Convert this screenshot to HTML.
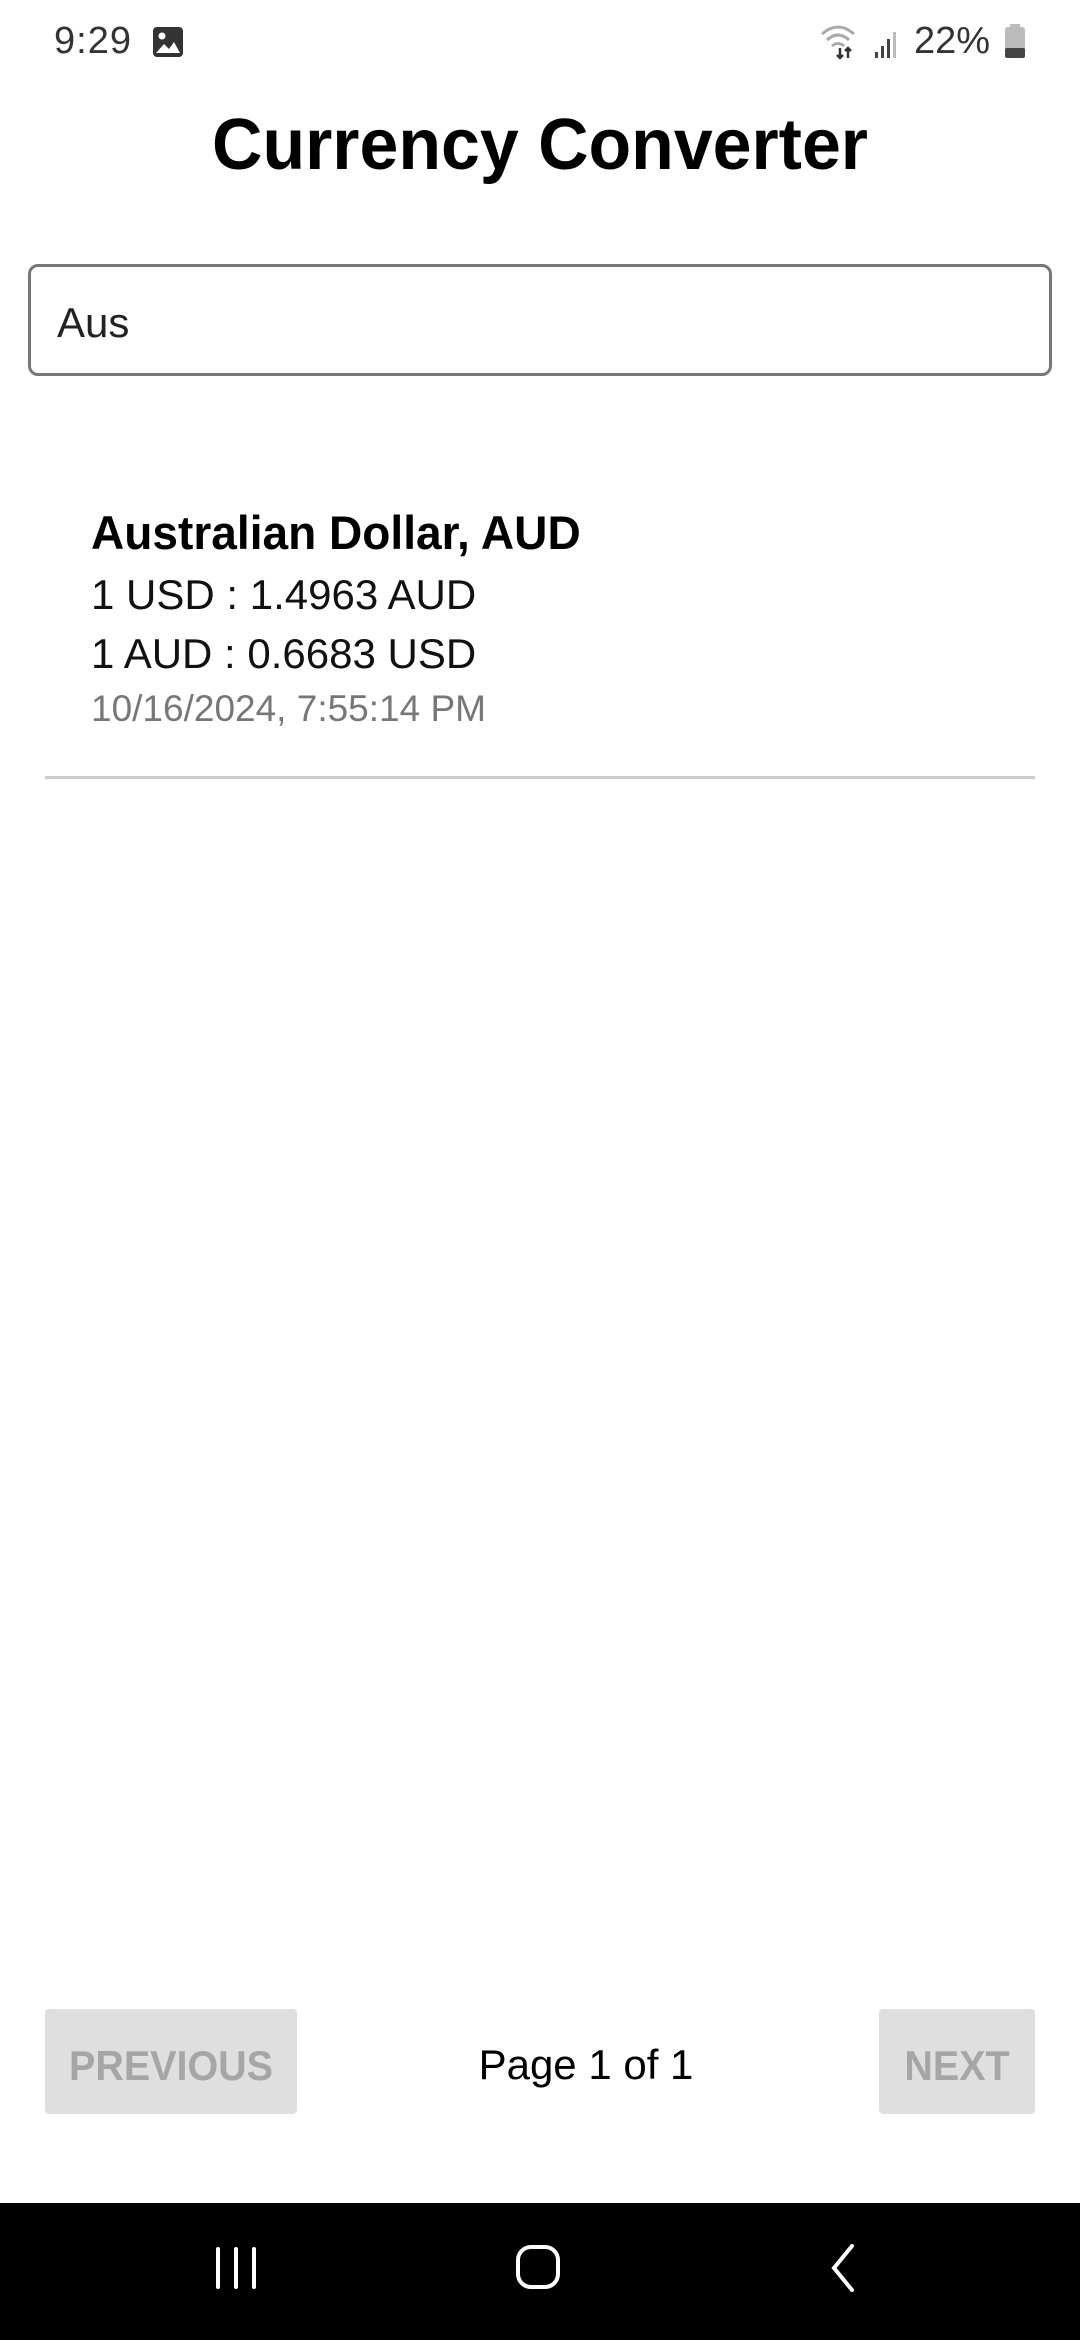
<!DOCTYPE html>
<html><head><meta charset="utf-8"><style>
*{margin:0;padding:0;box-sizing:border-box}
body{width:1080px;height:2340px;background:#fff;position:relative;overflow:hidden;font-family:"Liberation Sans",sans-serif;color:#000}
.a{position:absolute;white-space:nowrap}
</style></head><body>
<div class="a" style="left:54px;top:20px;font-size:38px;color:#333;letter-spacing:1px">9:29</div>
<svg class="a" style="left:152px;top:26px" width="32" height="32" viewBox="0 0 32 32"><rect x="1" y="1" width="30" height="30" rx="4" fill="#333"/><circle cx="10" cy="10" r="3.5" fill="#fff"/><path d="M4 27 L12 18 L17 23 L22 16 L28 27 Z" fill="#fff"/></svg>
<svg class="a" style="left:818px;top:22px" width="86" height="40" viewBox="0 0 86 40"><path d="M4 12 Q20 -2 36 12" stroke="#aaa" stroke-width="3" fill="none"/><path d="M9 18 Q20 8 31 18" stroke="#aaa" stroke-width="3" fill="none"/><path d="M14 24 Q20 19 26 24" stroke="#aaa" stroke-width="3" fill="none"/><path d="M22 26 v10 M19 33 l3 3 l3 -3 M30 36 v-10 M27 29 l3 -3 l3 3" stroke="#333" stroke-width="2.5" fill="none"/><rect x="57" y="30" width="3" height="6" fill="#444"/><rect x="63" y="24" width="3" height="12" fill="#444"/><rect x="69" y="17" width="3" height="19" fill="#444"/><rect x="75" y="10" width="3" height="26" fill="#bbb"/></svg>
<div class="a" style="left:914px;top:20px;font-size:38px;color:#333">22%</div>
<svg class="a" style="left:1004px;top:24px" width="22" height="34" viewBox="0 0 22 34"><rect x="6" y="0" width="10" height="4" fill="#bbb"/><rect x="1" y="3" width="20" height="31" rx="3" fill="#bbb"/><rect x="1" y="24" width="20" height="10" rx="2" fill="#444"/></svg>
<div class="a" style="left:0;width:1080px;text-align:center;top:104px;font-size:72px;font-weight:bold;transform:scaleX(0.97)">Currency Converter</div>
<div class="a" style="left:28px;top:264px;width:1024px;height:112px;border:3px solid #777;border-radius:10px"></div>
<div class="a" style="left:57px;top:299px;font-size:42px;color:#222">Aus</div>
<div class="a" style="left:91px;top:505px;font-size:47px;font-weight:bold;transform:scaleX(0.98);transform-origin:left">Australian Dollar, AUD</div>
<div class="a" style="left:91px;top:571px;font-size:42px;color:#111">1 USD : 1.4963 AUD</div>
<div class="a" style="left:91px;top:630px;font-size:42px;color:#111">1 AUD : 0.6683 USD</div>
<div class="a" style="left:91px;top:688px;font-size:37px;color:#777">10/16/2024, 7:55:14 PM</div>
<div class="a" style="left:45px;top:776px;width:990px;height:3px;background:#ccc"></div>
<div class="a" style="left:45px;top:2009px;width:252px;height:105px;background:#dfdfdf;border-radius:4px"></div>
<div class="a" style="left:45px;top:2013px;width:252px;line-height:105px;color:#a6a6a6;font-size:42px;font-weight:bold;text-align:center;transform:scaleX(0.94)">PREVIOUS</div>
<div class="a" style="left:376px;top:2041px;width:420px;text-align:center;font-size:42px">Page 1 of 1</div>
<div class="a" style="left:879px;top:2009px;width:156px;height:105px;background:#dfdfdf;border-radius:4px"></div>
<div class="a" style="left:879px;top:2013px;width:156px;line-height:105px;color:#a6a6a6;font-size:42px;font-weight:bold;text-align:center;transform:scaleX(0.94)">NEXT</div>
<div class="a" style="left:0;top:2203px;width:1080px;height:137px;background:#000"></div>
<svg class="a" style="left:0;top:2203px" width="1080" height="137"><g stroke="#fff" stroke-width="4" fill="none" stroke-linecap="round"><path d="M218 46 V84 M236 46 V84 M254 46 V84"/><rect x="518" y="44" width="40" height="40" rx="13"/><path d="M852 43 L834 65 L852 87"/></g></svg>
</body></html>
